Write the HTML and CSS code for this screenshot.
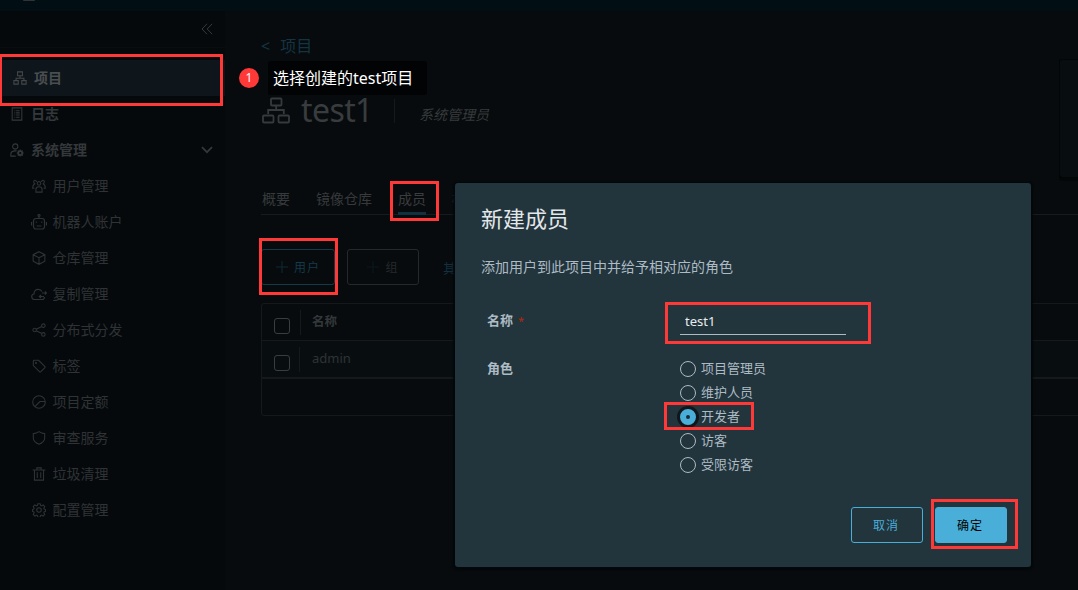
FILE: index.html
```
<!DOCTYPE html>
<html lang="zh-CN">
<head>
    <meta charset="UTF-8">
    <meta name="viewport" content="width=device-width, initial-scale=1.0">
    <title>Harbor</title>
    <link rel="stylesheet" href="styles.css">
</head>
<body>
    <header class="header"><span class="logo"></span></header>
    <div class="container">
        <nav class="sidebar">
            <div class="collapse">
                <svg width="12" height="12" viewBox="0 0 12 12"><path d="M6 .8 1 6l5 5.2M11.2.8 6.2 6l5 5.2"/></svg>
            </div>
            <ul class="menu topmenu">
                <li class="item active">
                    <svg class="icon" viewBox="0 0 16 16"><path d="M5.2 1h5.6v4.4H5.2zM1 11h5v4H1zM10 11h5v4h-5zM8 5.5v2.7M3.5 11V8.2h9V11"/></svg>
                    <span>项目</span>
                </li>
                <li class="item">
                    <svg class="icon" viewBox="0 0 16 16"><path d="M2.5 1h11v14h-11zM5 4.2h1M7 4.2h4M5 6.7h1M7 6.7h4M5 9.2h1M7 9.2h4M5 11.7h1M7 11.7h4"/></svg>
                    <span>日志</span>
                </li>
                <li class="item">
                    <svg class="icon" viewBox="0 0 16 16"><circle cx="6" cy="4" r="3"/><path d="M6.5 15H1v-2.5c0-2 2.200-3.500 5-3.500h1.500"/><circle cx="11.700" cy="11.500" r="2.300" stroke-width="2"/><path d="M11.700 7.500v1.500M11.700 14v1.500M7.700 11.500h1.500M14.200 11.500h1.500M8.900 8.700l1 1M13.500 13.300l1 1M14.500 8.700l-1 1M9.900 13.300l-1 1"/></svg>
                    <span>系统管理</span>
                    <svg class="caret" width="12" height="8" viewBox="0 0 12 8"><path d="M1 1.200l5 5 5-5"/></svg>
                </li>
            </ul>
            <ul class="menu submenu">
                <li class="item">
                    <svg class="icon" viewBox="0 0 16 16"><circle cx="8" cy="5" r="2"/><path d="M4.500 15v-3c0-2 1.500-3.200 3.500-3.200s3.500 1.200 3.500 3.200v3zM5 3.500C5 .5 1.500.8 2 3.500c0 1 .5 1.500 1.200 2C1.500 6.300.8 7.500.8 10.500h2M11 3.500c0-3 3.500-2.700 3 0 0 1-.5 1.500-1.200 2 1.700.8 2.400 2 2.400 5h-2"/></svg>
                    <span>用户管理</span>
                </li>
                <li class="item">
                    <svg class="icon wide" viewBox="0 0 16 16"><rect x="2.500" y="4.500" width="11" height="10.500" rx="2.500"/><circle cx="8" cy="1.500" r="1"/><path d="M8 2.500v2M.5 8v3.500M15.500 8v3.500M5.300 7.500v1.300M10.700 7.500v1.300M5.500 12h5"/></svg>
                    <span>机器人账户</span>
                </li>
                <li class="item">
                    <svg class="icon" viewBox="0 0 16 16"><path d="M8 .8l6.700 3.400v7.500L8 15.200l-6.700-3.500V4.200zM1.300 4.200L8 7.600l6.700-3.400M8 7.600v7.600"/></svg>
                    <span>仓库管理</span>
                </li>
                <li class="item">
                    <svg class="icon wide" viewBox="0 0 16 16"><path d="M13.500 11c0 1.700-1 2.500-2.500 2.500H3.500C.2 13.500-.3 8.500 3 8c0-3 2-4.700 4.300-4.700 1.700 0 3 .8 3.700 2.200M11 7h4.500M14 5.500L15.500 7 14 8.500M13 10.500H8.500M10 9l-1.600 1.500L10 12"/></svg>
                    <span>复制管理</span>
                </li>
                <li class="item">
                    <svg class="icon" viewBox="0 0 16 16"><circle cx="3" cy="8" r="2"/><circle cx="13" cy="3" r="2"/><circle cx="13" cy="13" r="2"/><path d="M4.800 7.100l6.400-3.200M4.800 8.900l6.400 3.200"/></svg>
                    <span>分布式分发</span>
                </li>
                <li class="item">
                    <svg class="icon" viewBox="0 0 16 16"><path d="M1.500 2.500v5l7 7c.6.600 1 .6 1.600 0l4.400-4.400c.6-.6.6-1 0-1.600l-7-7h-5c-.6 0-1 .4-1 1z"/><circle cx="4.500" cy="4.500" r=".6"/></svg>
                    <span>标签</span>
                </li>
                <li class="item">
                    <svg class="icon" viewBox="0 0 16 16"><circle cx="8" cy="8" r="7.200"/><path d="M15 7.500H9L3.300 13.200"/></svg>
                    <span>项目定额</span>
                </li>
                <li class="item">
                    <svg class="icon" viewBox="0 0 16 16"><path d="M8 .8c2 1.500 4 2.200 6.500 2.200v5c0 3.500-3 5.700-6.500 7.200C4.500 13.700 1.500 11.500 1.500 8V3C4 3 6 2.300 8 .8z"/></svg>
                    <span>审查服务</span>
                </li>
                <li class="item">
                    <svg class="icon" viewBox="0 0 16 16"><path d="M.8 3.500h14.400M5.500 3.300V1h5v2.300M2.800 3.500V15h10.400V3.500M6 6v6.500M10 6v6.500"/></svg>
                    <span>垃圾清理</span>
                </li>
                <li class="item">
                    <svg class="icon" viewBox="0 0 16 16"><circle cx="8" cy="8" r="2.600"/><path d="M6.700.8h2.600l.5 2 1 .5 1.900-1.100 1.900 1.900-1.100 1.900.4 1 1.600.5v2l-1.600.6-.4 1 1.100 1.900-1.900 1.900-1.900-1.100-1 .5-.5 1.900H6.700l-.5-1.900-1-.5-1.900 1.100L1.400 13l1.100-1.900-.4-1-1.600-.6v-2l1.600-.5.4-1-1.100-1.900 1.900-1.900 1.900 1.100 1-.5z"/></svg>
                    <span>配置管理</span>
                </li>
            </ul>
        </nav>

        <main class="content">
            <div class="breadcrumb"><span>&lt;</span><span>项目</span></div>
            <div class="project">
                <svg class="project-icon" viewBox="0 0 28 28"><rect x="9" y="1.500" width="10.500" height="7" rx="1"/><rect x="1" y="18.500" width="10.500" height="7" rx="1"/><rect x="16.500" y="18.500" width="10.500" height="7" rx="1"/><path d="M14.200 8.500V13M6.200 17v-4h15.600v4"/></svg>
                <h1 class="project-name">test1</h1>
                <span class="role-name">系统管理员</span>
            </div>
            <ul class="tabs">
                <li>概要</li>
                <li>镜像仓库</li>
                <li class="selected">成员</li>
                <li class="cut">标</li>
            </ul>
            <div class="actions">
                <button class="btn btn-user"><svg viewBox="0 0 12 12"><path d="M6 0v12M0 6h12"/></svg>用户</button>
                <button class="btn btn-group"><svg viewBox="0 0 12 12"><path d="M6 0v12M0 6h12"/></svg>组</button>
                <span class="more">其</span>
            </div>
            <div class="grid">
                <div class="row head"><span class="check"></span><span class="cell">名称</span></div>
                <div class="row body"><span class="check"></span><span class="cell">admin</span></div>
                <div class="foot"></div>
            </div>
        </main>
        <aside class="summary"></aside>
    </div>

    <div class="modal">
        <h3 class="modal-title">新建成员</h3>
        <p class="modal-text">添加用户到此项目中并给予相对应的角色</p>
        <form class="form">
            <div class="field">
                <label class="label">名称<span class="required">*</span></label>
                <input type="text" class="input" value="test1">
            </div>
            <div class="field">
                <label class="label">角色</label>
                <div class="radios">
                    <label class="radio"><i></i>项目管理员</label>
                    <label class="radio"><i></i>维护人员</label>
                    <label class="radio checked"><i></i>开发者</label>
                    <label class="radio"><i></i>访客</label>
                    <label class="radio"><i></i>受限访客</label>
                </div>
            </div>
        </form>
        <div class="modal-footer">
            <button class="btn btn-cancel">取消</button>
            <button class="btn btn-ok">确定</button>
        </div>
    </div>

    <div class="mark mark-project"></div>
    <div class="mark mark-tab"></div>
    <div class="mark mark-user"></div>
    <div class="mark mark-name"></div>
    <div class="mark mark-role"></div>
    <div class="mark mark-ok"></div>
    <div class="step"><span class="step-num">1</span><span class="step-text">选择创建的test项目</span></div>
</body>
</html>
```
FILE: styles.css
```
* { box-sizing: border-box; }
body { margin: 0; height: 590px; overflow: hidden; position: relative; background: #070b0d; color: #363a3c; font-family: "Noto Sans", "Noto Sans CJK SC", sans-serif; font-size: 14px; }
ul { list-style: none; margin: 0; padding: 0; }
svg { fill: none; stroke: currentColor; flex: none; }

.header { height: 11px; background: #010f15; overflow: hidden; padding-left: 23px; }
.logo { display: block; width: 12px; height: 1px; background: #303436; border-radius: 0 0 6px 6px; }
.container { display: flex; height: 579px; }

/* sidebar */
.sidebar { width: 225px; flex: none; background: #05090c; }
.collapse { height: 37px; padding: 12px 12px 0 0; display: flex; justify-content: flex-end; border-bottom: 1px solid #090d10; }
.menu { color: #34383a; }
.topmenu { padding-top: 12px; font-weight: 600; }
.item { height: 36px; display: flex; align-items: center; padding: 0 12px 0 10px; line-height: 20px; }
.item span { margin-left: 7px; }
.icon { width: 14px; height: 14px; stroke-width: 1.2; }
.icon.wide { width: 16px; height: 16px; margin: 0 -1px; }
.item.active { background: #0e161b; color: #4a4e51; padding-left: 13px; }
.item.active .icon { color: #44484b; }
.caret { margin-left: auto; stroke-width: 1.7; }
.submenu { color: #2f3335; }
.submenu .item { padding-left: 32px; }
.submenu .item span { margin-left: 6.500px; }

/* project page */
.content { flex: 1; min-width: 0; padding: 23px 0 0 36px; }
.breadcrumb { display: flex; gap: 10px; height: 24px; line-height: 24px; font-size: 16px; color: #143443; }
.project { display: flex; height: 52px; margin-top: 27px; }
.project-icon { width: 28px; height: 28px; margin: 12px 0 0 1px; stroke-width: 1.8; }
.project-name { margin: 3px 0 0 11px; width: 93px; height: 44px; line-height: 44px; font-size: 32px; font-weight: 400; font-family: "Noto Sans", sans-serif; letter-spacing: -0.6px; color: #393c3e; }
.role-name { height: 24px; margin-top: 14px; padding: 4px 0 0 24px; line-height: 24px; font-style: italic; border-left: 1px solid #15191b; }
.tabs { display: flex; gap: 26px; height: 31px; margin-top: 47px; padding-left: 1px; width: 817px; border-bottom: 1px solid #171b1d; line-height: 30px; }
.tabs li { height: 31px; }
.tabs .selected { border-bottom: 3px solid #12303e; color: #3a3d3f; }
.tabs .cut { width: 4px; overflow: hidden; white-space: nowrap; }
.actions { display: flex; align-items: center; margin-top: 34px; height: 36px; }
.btn { height: 36px; width: 72px; padding: 0 2px 0 0; border-radius: 3px; border: 1px solid; background: none; font: 12px "Noto Sans", "Noto Sans CJK SC", sans-serif; letter-spacing: 1px; display: flex; align-items: center; justify-content: center; }
.btn svg { width: 12px; height: 12px; margin-right: 6px; }
.btn-user { width: 74px; padding: 0; color: #143a4a; }
.btn-user svg { color: #0e2a36; }
.btn-group { margin-left: 12px; padding: 0; color: #25292b; }
.btn-group svg { color: #0a191f; }
.more { width: 11px; overflow: hidden; margin-left: 24px; font-size: 13px; color: #12303f; }
.grid { width: 830px; height: 113px; margin-top: 18px; border: 1px solid #15191b; border-radius: 3px; }
.row { display: flex; height: 37px; border-bottom: 1px solid #15191b; }
.row.body { height: 38px; background: #080e10; border-bottom-width: 2px; }
.check { width: 16px; height: 16px; margin: 14px 0 0 12px; border: 1px solid #393d40; border-radius: 3px; }
.cell { height: 25px; margin: 6px 0 0 10px; padding-left: 11px; border-left: 1px solid #15191b; line-height: 23px; font-size: 12.500px; font-weight: 600; color: #34383a; }
.body .cell { margin-left: 9px; padding-left: 12px; font-size: 13px; font-weight: 400; line-height: 22px; color: #2f3335; }
.summary { width: 19px; height: 119px; margin-top: 48px; background: #080e10; border: 1px solid #030608; border-right: 0; border-radius: 3px 0 0 3px; box-shadow: 0 3px 0 #040708; flex: none; }

/* dialog */
.modal { position: absolute; left: 455px; top: 183px; width: 576px; height: 384px; padding: 21px 24px 24px 26px; background: #22343c; border-radius: 3px; color: #adbbc4; box-shadow: 0 1px 2px 2px #04080a; display: flex; flex-direction: column; }
.modal-title { margin: 0; height: 28px; line-height: 28px; font-size: 22px; font-weight: 400; color: #e3e7ea; }
.modal-text { margin: 23px 0 0; height: 24px; line-height: 24px; }
.form { padding: 26px 0 0 6px; font-size: 13px; }
.field { display: flex; height: 48px; }
.label { width: 193px; line-height: 24px; margin-top: 3px; font-weight: 600; }
.required { margin-left: 5px; font-size: 11px; font-weight: 400; color: #b02a0c; }
.input { width: 166px; height: 27px; padding: 0 5px; margin-top: 3px; border: 0; border-bottom: 1px solid #adbbc4; background: none; outline: none; color: #e9ecef; font: 13px "Noto Sans", sans-serif; }
.radios { display: flex; flex-direction: column; padding-top: 3px; }
.radio { height: 24px; line-height: 24px; display: flex; }
.radio i { width: 16px; height: 16px; margin: 5px 5px 0 0; border: 1px solid #adbbc4; border-radius: 50%; }
.radio.checked i { border: 6px solid #49afd9; background: #1b2b32; box-shadow: 0 0 0 3px #10161a; }
.modal-footer { display: flex; justify-content: flex-end; gap: 12px; margin-top: auto; }
.btn-cancel { color: #49afd9; }
.btn-ok { background: #49afd9; border-color: #49afd9; color: #000; }

/* walkthrough marks */
.mark { position: absolute; border: 3px solid #ff3838; }
.mark-project { left: -1px; top: 54px; width: 224px; height: 52px; }
.mark-tab { left: 390px; top: 181px; width: 49px; height: 40px; }
.mark-user { left: 259px; top: 238px; width: 79px; height: 57px; }
.mark-name { left: 665px; top: 302px; width: 206px; height: 42px; }
.mark-role { left: 664px; top: 402px; width: 90px; height: 28px; }
.mark-ok { left: 931px; top: 499px; width: 87px; height: 50px; }
.step { position: absolute; left: 239px; top: 61px; display: flex; align-items: center; height: 34px; }
.step-num { width: 20px; height: 20px; border-radius: 50%; background: #ff3838; color: #fff; font-size: 12px; line-height: 20px; text-align: center; }
.step-text { width: 159px; height: 34px; margin-left: 9px; padding-left: 5px; border-radius: 3px; background: #020304; color: #fff; font-size: 16px; line-height: 34px; white-space: nowrap; }
```
